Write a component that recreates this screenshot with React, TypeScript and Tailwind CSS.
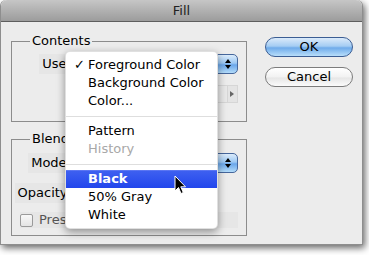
import React from 'react';

const font = { fontFamily: '"DejaVu Sans", "Liberation Sans", sans-serif' };

function Stepper() {
  return (
    <div className="w-[21px] h-[20px] rounded-r-[5px] border border-[#46679c] bg-[linear-gradient(to_bottom,#dcecfb_0%,#9cc8f3_45%,#6aa6ea_55%,#b3dcfa_100%)] flex flex-col items-center justify-center gap-[2px]">
      <div className="w-0 h-0 border-l-[3px] border-r-[3px] border-b-[4px] border-l-transparent border-r-transparent border-b-black" />
      <div className="w-0 h-0 border-l-[3px] border-r-[3px] border-t-[4px] border-l-transparent border-r-transparent border-t-black" />
    </div>
  );
}

function Select() {
  return (
    <div className="flex h-[20px]">
      <div className="w-[140px] h-[20px] bg-white border border-[#9a9a9a] rounded-l-[5px]" />
      <Stepper />
    </div>
  );
}

function Label({ children }: { children: React.ReactNode }) {
  return (
    <div className="w-[62px] flex justify-end shrink-0">
      <div className="h-[20px] flex items-center px-[3px] bg-[#e6e6e6] whitespace-nowrap">{children}</div>
    </div>
  );
}

const menuItems: { label?: string; sep?: boolean; checked?: boolean; disabled?: boolean; active?: boolean }[] = [
  { label: 'Foreground Color', checked: true },
  { label: 'Background Color' },
  { label: 'Color...' },
  { sep: true },
  { label: 'Pattern' },
  { label: 'History', disabled: true },
  { sep: true },
  { label: 'Black', active: true },
  { label: '50% Gray' },
  { label: 'White' },
];

export default function App() {
  return (
    <div className="w-[369px] h-[255px] bg-white text-[13px] leading-[16px] text-black" style={font}>
      <div className="relative w-[363px] h-[245px] bg-[#ececec] rounded-t-[6px] border-x border-b border-[#8e8e8e] shadow-[2px_3px_7px_rgba(0,0,0,0.6)] flex flex-col">
        {/* title bar */}
        <div className="h-[22px] rounded-t-[6px] bg-gradient-to-b from-[#c6c6c6] to-[#9c9c9c] border-b border-[#5e5e5e] flex items-center justify-center text-[#222]">
          Fill
        </div>

        <div className="flex">
          {/* left column */}
          <div className="pl-[10px] flex flex-col">
            <fieldset className="mt-[11px] min-w-0 w-[236px] h-[89px] border border-[#8c8c8c]">
              <legend className="ml-[18px] px-[2px] leading-[16px]">Contents</legend>
              <div className="mt-[5px] flex items-center gap-[3px]">
                <Label>Use:</Label>
                <Select />
              </div>
              <div className="mt-[11px] ml-[60px] w-[166px] h-[18px] flex items-center">
                <div className="text-[#a8a8a8] whitespace-nowrap">Custom Pattern:</div>
                <div className="ml-auto w-[54px] h-[18px] border border-[#d6d6d6] bg-[#e8e8e8]" />
                <div className="w-[11px] h-[18px] border border-[#d6d6d6] border-l-0 bg-[#e4e4e4] flex items-center justify-center">
                  <div className="w-0 h-0 border-t-[3px] border-b-[3px] border-l-[4px] border-t-transparent border-b-transparent border-l-[#666]" />
                </div>
              </div>
            </fieldset>

            <fieldset className="mt-[9px] min-w-0 w-[236px] h-[105px] border border-[#8c8c8c]">
              <legend className="ml-[18px] px-[2px] leading-[16px]">Blending</legend>
              <div className="mt-[6px] flex items-center gap-[3px]">
                <Label>Mode:</Label>
                <Select />
              </div>
              <div className="mt-[10px] flex items-center gap-[3px]">
                <Label>Opacity:</Label>
                <div className="w-[44px] h-[20px] bg-white border border-[#9a9a9a] text-right pr-[3px] leading-[18px]">100</div>
                <div>%</div>
              </div>
              <div className="mt-[9px] ml-[8px] w-[218px] h-[16px] bg-[#e6e6e6] flex items-center gap-[6px]">
                <div className="w-[13px] h-[13px] shrink-0 rounded-[2px] border border-[#9a9a9a] bg-gradient-to-b from-[#f8f8f8] to-[#e4e4e4]" />
                <div className="text-[#555] whitespace-nowrap">Preserve Transparency</div>
              </div>
            </fieldset>
          </div>

          {/* buttons */}
          <div className="ml-[18px] mt-[15px] flex flex-col gap-[10px]">
            <div className="w-[88px] h-[20px] rounded-full border border-[#3b5d93] bg-[linear-gradient(to_bottom,#dbeafa_0%,#a5cdf3_45%,#6fabea_55%,#b8defa_100%)] flex items-center justify-center">
              OK
            </div>
            <div className="w-[88px] h-[20px] rounded-full border border-[#7c7c7c] bg-[linear-gradient(to_bottom,#ffffff_0%,#f2f2f2_50%,#e6e6e6_55%,#fbfbfb_100%)] flex items-center justify-center">
              Cancel
            </div>
          </div>
        </div>

        {/* popup menu */}
        <div className="absolute left-[64px] top-[51px] w-[153px] py-[4px] bg-white rounded-[5px] border border-[rgba(0,0,0,0.12)] shadow-[0_3px_8px_rgba(0,0,0,0.4)]">
          {menuItems.map((it, i) =>
            it.sep ? (
              <div key={i} className="h-[12px] flex items-center">
                <div className="w-full h-px bg-[#dedede]" />
              </div>
            ) : (
              <div
                key={i}
                className={
                  'h-[18px] flex items-center pl-[22px] relative ' +
                  (it.active
                    ? 'bg-[linear-gradient(to_bottom,#6a82f4_0%,#3d5ff0_8%,#2246ec_100%)] text-white font-semibold'
                    : it.disabled
                    ? 'text-[#a8a8a8]'
                    : 'text-black')
                }
              >
                {it.checked && <span className="absolute left-[8px]">✓</span>}
                {it.label}
              </div>
            )
          )}
        </div>

        {/* cursor */}
        <svg className="absolute left-[173px] top-[175px]" width="13" height="20" viewBox="0 0 13 20">
          <path d="M1 1 L1 16 L4.5 12.5 L7 18.5 L9.3 17.5 L6.8 11.8 L11.5 11.8 Z" fill="black" stroke="white" strokeWidth="1" strokeLinejoin="round" />
        </svg>
      </div>
    </div>
  );
}
